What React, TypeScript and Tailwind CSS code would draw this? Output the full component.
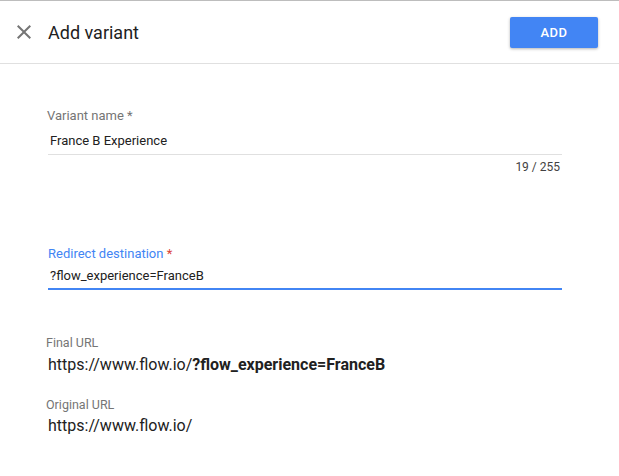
export default function App() {
  return (
    <div className="min-h-screen border-t border-[#bdbdbd] bg-white font-['Roboto',sans-serif] text-[#212121]">
      {/* HEADER */}
      <div className="flex h-[63px] items-center border-b border-[#e0e0e0] pl-3 pr-[21px]">
        <button className="flex h-6 w-6 items-center justify-center text-[#757575]">
          <svg viewBox="0 0 24 24" className="h-6 w-6" fill="currentColor">
            <path d="M19 6.41L17.59 5 12 10.59 6.41 5 5 6.41 10.59 12 5 17.59 6.41 19 12 13.41 17.59 19 19 17.59 13.41 12z" />
          </svg>
        </button>
        <h1 className="ml-3 text-[18px] font-normal text-[#212121]">Add variant</h1>
        <button className="ml-auto mt-px h-[31px] w-[88px] rounded-[2px] bg-[#4285f4] text-[13px] font-medium tracking-[0.04em] text-white shadow-[0_1px_3px_rgba(0,0,0,0.3)]">
          ADD
        </button>
      </div>

      {/* BODY */}
      <div className="w-[562px] pl-12">
        {/* VARIANT NAME */}
        <div className="mt-[44px]">
          <label className="-ml-px block text-[13px] leading-[15px] text-[#757575]">Variant name *</label>
          <div className="mt-[10px] border-b border-[#e0e0e0] pb-[5px] pl-[2px] text-[13px] leading-4">
            France B Experience
          </div>
          <p className="mt-[5px] pr-[2px] text-right text-[12px] leading-[14px] text-[#424242]">19 / 255</p>
        </div>

        {/* REDIRECT */}
        <div className="mt-[72px]">
          <label className="block text-[13px] leading-[15px] text-[#4285f4]">
            Redirect destination <span className="text-[#db4437]">*</span>
          </label>
          <div className="mt-[7px] border-b-2 border-[#4285f4] pb-[4px] pl-[2px] text-[13px] leading-4">
            ?flow_experience=FranceB
          </div>
        </div>

        {/* FINAL URL */}
        <div className="mt-[45px]">
          <p className="-ml-0.5 text-[12.5px] leading-[15px] text-[#757575]">Final URL</p>
          <p className="mt-[5px] text-[16px] leading-5">
            https://www.flow.io/<span className="font-bold">?flow_experience=FranceB</span>
          </p>
        </div>

        {/* ORIGINAL URL */}
        <div className="mt-[22px]">
          <p className="-ml-0.5 text-[12.5px] leading-[15px] text-[#757575]">Original URL</p>
          <p className="mt-[4px] text-[16px] leading-5">https://www.flow.io/</p>
        </div>
      </div>
    </div>
  );
}
